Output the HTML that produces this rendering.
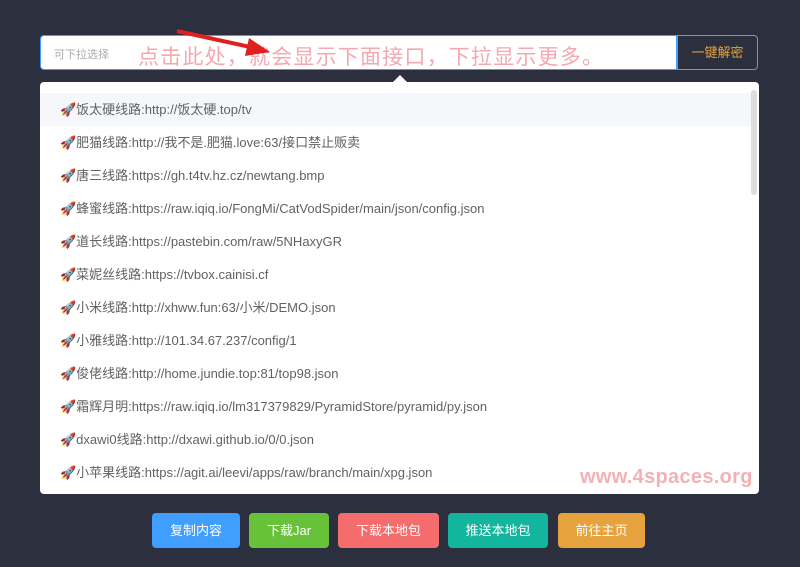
<!DOCTYPE html>
<html><head><meta charset="utf-8"><style>
body{margin:0;width:800px;height:567px;background:#2c2f3d;font-family:"Liberation Sans","Noto Sans CJK SC",sans-serif;position:relative;overflow:hidden}
.inp{position:absolute;left:40px;top:35px;width:635px;height:33px;background:#fff;border:1px solid #409eff;border-radius:4px 0 0 4px}
.inp span{position:absolute;left:13px;top:10px;font-size:11px;color:#aaa}
.btn1{position:absolute;left:677px;top:35px;width:79px;height:33px;border:1px solid #8a93a6;border-radius:0 4px 4px 0;background:#2c2f3d;color:#e6a23c;font-size:13px;text-align:center;line-height:33px}
.ann{position:absolute;left:138px;top:41px;font-size:21px;color:#f5a8b0;text-shadow:0 0 2px #fff;letter-spacing:1.2px}
.dd{position:absolute;left:40px;top:82px;width:719px;height:412px;background:#fff;border-radius:4px;overflow:hidden}
.tri{position:absolute;left:393px;top:75px;width:0;height:0;border-left:7px solid transparent;border-right:7px solid transparent;border-bottom:7px solid #fff}
.row{position:absolute;left:0;width:711px;height:33px;line-height:33px;padding-left:20px;font-size:13px;color:#606266;box-sizing:border-box}
.row.h{background:#f5f7fa}
.sb{position:absolute;left:711px;top:8px;width:6px;height:105px;background:#ddd;border-radius:3px}
.wm{position:absolute;left:580px;top:466px;font-size:20px;font-weight:bold;color:#f3b1b6;text-shadow:0 0 2px #fff;letter-spacing:0.3px}
.b{position:absolute;top:513px;height:35px;line-height:35px;text-align:center;color:#fff;font-size:13px;border-radius:4px}
</style></head><body>
<div class="inp"><span>可下拉选择</span></div>
<div class="btn1">一键解密</div>
<div class="ann">点击此处，就会显示下面接口，下拉显示更多。</div>
<svg style="position:absolute;left:175px;top:28px" width="100" height="30"><line x1="2" y1="3" x2="80" y2="20" stroke="#e02020" stroke-width="4"/><polygon points="95,24 74,10 70,28" fill="#e02020"/></svg>
<div class="tri"></div>
<div class="dd">
<div class="row h" style="top:11px">🚀饭太硬线路:http://饭太硬.top/tv</div>
<div class="row" style="top:44px">🚀肥猫线路:http://我不是.肥猫.love:63/接口禁止贩卖</div>
<div class="row" style="top:77px">🚀唐三线路:https://gh.t4tv.hz.cz/newtang.bmp</div>
<div class="row" style="top:110px">🚀蜂蜜线路:https://raw.iqiq.io/FongMi/CatVodSpider/main/json/config.json</div>
<div class="row" style="top:143px">🚀道长线路:https://pastebin.com/raw/5NHaxyGR</div>
<div class="row" style="top:176px">🚀菜妮丝线路:https://tvbox.cainisi.cf</div>
<div class="row" style="top:209px">🚀小米线路:http://xhww.fun:63/小米/DEMO.json</div>
<div class="row" style="top:242px">🚀小雅线路:http://101.34.67.237/config/1</div>
<div class="row" style="top:275px">🚀俊佬线路:http://home.jundie.top:81/top98.json</div>
<div class="row" style="top:308px">🚀霜辉月明:https://raw.iqiq.io/lm317379829/PyramidStore/pyramid/py.json</div>
<div class="row" style="top:341px">🚀dxawi0线路:http://dxawi.github.io/0/0.json</div>
<div class="row" style="top:374px">🚀小苹果线路:https://agit.ai/leevi/apps/raw/branch/main/xpg.json</div>
<div class="sb"></div>
</div>
<div class="wm">www.4spaces.org</div>
<div class="b" style="left:152px;width:88px;background:#409eff">复制内容</div>
<div class="b" style="left:249px;width:80px;background:#67c23a">下载Jar</div>
<div class="b" style="left:338px;width:101px;background:#f56c6c">下载本地包</div>
<div class="b" style="left:448px;width:100px;background:#13b59c">推送本地包</div>
<div class="b" style="left:558px;width:87px;background:#e6a23c">前往主页</div>
</body></html>
